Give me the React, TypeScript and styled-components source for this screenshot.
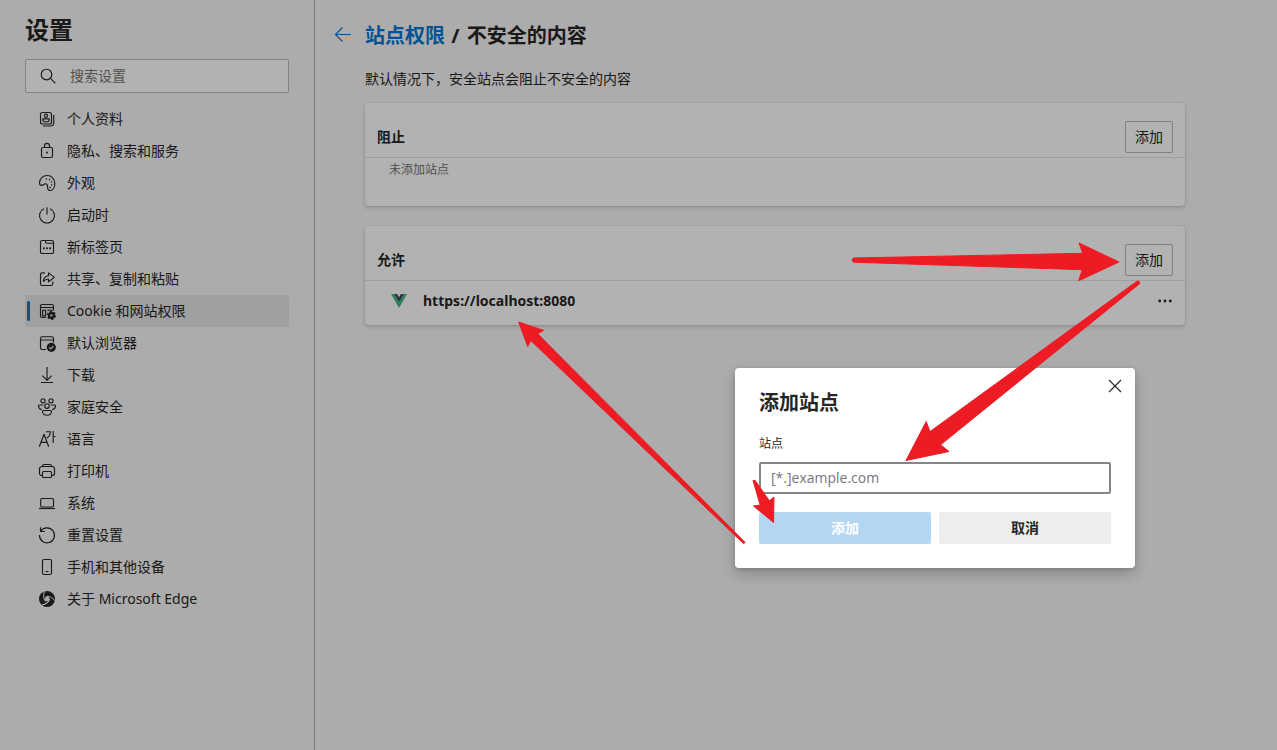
import React from 'react';
import styled, { createGlobalStyle } from 'styled-components';

const GlobalStyle = createGlobalStyle`
  * { box-sizing: border-box; }
  body {
    margin: 0;
    background: #f7f7f7;
    color: #262626;
    font-family: "Noto Sans", "Noto Sans CJK SC", sans-serif;
    font-size: 14px;
    line-height: 20px;
  }
  button, input { font: inherit; color: inherit; }
  h1, h2, p, ul { margin: 0; padding: 0; }
`;

const Page = styled.div`
  position: relative;
  display: flex;
  min-height: 100vh;
  overflow: hidden;
`;

const Sidebar = styled.aside`
  flex: 0 0 315px;
  padding: 12px 25px 0;
  border-right: 1px solid #b0b0b0;
`;

const SidebarTitle = styled.h1`
  font-size: 24px;
  line-height: 36px;
  font-weight: 700;
`;

const SearchBox = styled.label`
  display: flex;
  align-items: center;
  gap: 13px;
  height: 34px;
  margin: 11px 0 10px;
  padding: 0 13px;
  border: 1px solid #bcbcbc;
  border-radius: 2px;
  background: #fff;
`;

const SearchInput = styled.input`
  flex: 1;
  min-width: 0;
  height: 30px;
  padding: 0 0 2px;
  border: 0;
  outline: 0;
  background: transparent;
  &::placeholder { color: #767676; opacity: 1; }
`;

const NavList = styled.ul`
  list-style: none;
`;

const NavLink = styled.a<{ $active?: boolean }>`
  display: flex;
  align-items: center;
  gap: 11px;
  height: 32px;
  padding-left: ${(p) => (p.$active ? 8 : 13)}px;
  border-radius: 2px;
  color: inherit;
  text-decoration: none;
  background: ${(p) => (p.$active ? '#e5e5e5' : 'transparent')};
  &::before {
    content: "";
    display: ${(p) => (p.$active ? 'block' : 'none')};
    width: 3px;
    height: 20px;
    margin: 0 -3px 0 -6px;
    border-radius: 2px;
    background: #0078d4;
  }
`;

const Glyph = styled.svg`
  flex: none;
  display: block;
  overflow: visible;
  fill: none;
  stroke: currentColor;
  stroke-width: 1.15;
  stroke-linejoin: round;
`;

const Main = styled.main`
  flex: 1;
  min-width: 0;
  padding: 21px 20px 24px;
`;

const TitleRow = styled.header`
  display: flex;
  align-items: center;
  gap: 14px;
  height: 30px;
`;

const BackButton = styled.button`
  display: grid;
  place-items: center;
  width: 16px;
  height: 30px;
  padding: 0;
  border: 0;
  background: none;
  color: #0078d4;
`;

const PageTitle = styled.h2`
  font-size: 20px;
  line-height: 30px;
  font-weight: 700;
`;

const Separator = styled.span`
  margin: 0 2px 0 1px;
`;

const Crumb = styled.a`
  color: #0078d4;
  text-decoration: none;
`;

const Content = styled.div`
  max-width: 850px;
  padding-left: 30px;
`;

const Description = styled.p`
  margin: 18px 0 14px;
`;

const Card = styled.section`
  margin-bottom: 20px;
  border-radius: 4px;
  background: #fff;
  box-shadow: 0 2px 4px rgba(0, 0, 0, 0.16), 0 0 2px rgba(0, 0, 0, 0.14);
`;

const CardHeader = styled.div`
  display: flex;
  align-items: center;
  justify-content: space-between;
  padding: 18px 12px 4px;
  border-bottom: 1px solid #e2e2e2;
`;

const CardTitle = styled.h2`
  font-size: 14px;
  line-height: 20px;
  font-weight: 600;
`;

const OutlineButton = styled.button`
  width: 48px;
  height: 32px;
  padding: 0;
  border: 1px solid #b8b8b8;
  border-radius: 2px;
  background: transparent;
`;

const EmptyNote = styled.p`
  height: 48px;
  padding: 2px 24px;
  color: #737373;
  font-size: 12px;
`;

const SiteRow = styled.div`
  display: flex;
  align-items: center;
  gap: 16px;
  height: 44px;
  padding: 0 12px 4px 26px;
`;

const SiteName = styled.span`
  flex: 1;
  font-weight: 700;
`;

const MoreButton = styled.button`
  display: grid;
  place-items: center;
  width: 16px;
  height: 24px;
  padding: 0;
  border: 0;
  background: none;
`;

const Backdrop = styled.div`
  position: absolute;
  inset: 0;
  background: rgba(0, 0, 0, 0.3);
`;

const Dialog = styled.form`
  position: absolute;
  left: 735px;
  top: 368px;
  width: 400px;
  padding: 20px 24px 24px;
  border-radius: 4px;
  background: #fff;
  box-shadow: 0 6px 14px rgba(0, 0, 0, 0.2), 0 1px 4px rgba(0, 0, 0, 0.14);
`;

const DialogTitle = styled.h2`
  font-size: 20px;
  line-height: 30px;
  font-weight: 700;
`;

const CloseButton = styled.button`
  position: absolute;
  top: 6px;
  right: 8px;
  display: grid;
  place-items: center;
  width: 24px;
  height: 24px;
  padding: 0;
  border: 0;
  background: none;
`;

const FieldLabel = styled.label`
  display: block;
  margin: 16px 0 8px;
  font-size: 12px;
`;

const TextField = styled.input`
  display: block;
  width: 100%;
  height: 32px;
  padding: 0 10px 2px;
  border: 2px solid #868686;
  border-radius: 2px;
  outline: 0;
  font-family: "Open Sans", "Noto Sans CJK SC", sans-serif;
  &::placeholder { color: #767676; opacity: 1; }
`;

const Actions = styled.div`
  display: grid;
  grid-template-columns: 1fr 1fr;
  gap: 8px;
  margin-top: 18px;
`;

const ActionButton = styled.button<{ $primary?: boolean }>`
  height: 32px;
  padding: 0;
  border: 0;
  border-radius: 2px;
  font-weight: 600;
  color: ${(p) => (p.$primary ? '#fff' : '#262626')};
  background: ${(p) => (p.$primary ? '#b3d6f2' : '#ededed')};
`;

const Annotations = styled.svg`
  position: absolute;
  left: 0;
  top: 0;
  pointer-events: none;
  fill: #ed1c24;
  stroke: #ed1c24;
  stroke-width: 1;
  stroke-linejoin: round;
`;

const solid = { fill: 'currentColor', stroke: 'none' };

const glyphs: Record<string, React.ReactNode> = {
  profile: (
    <>
      <rect x="2.5" y="2.5" width="11" height="11.5" rx="2" />
      <path d="M15.7 5v7.8a3.2 3.2 0 0 1-3.2 3.2H5" />
      <circle cx="8" cy="5.7" r="1.6" />
      <path d="M4.8 8.8h6.4v1c0 1.4-1.3 2.2-3.2 2.2s-3.2-.8-3.2-2.2z" />
    </>
  ),
  lock: (
    <>
      <rect x="3.5" y="5.5" width="11" height="10" rx="1.5" />
      <path d="M6.5 5.5V3.8a2.5 2.5 0 0 1 5 0v1.7" />
      <circle cx="9" cy="10.5" r="1" {...solid} />
    </>
  ),
  palette: (
    <>
      <path d="M1.5 9C1.5 4.8 4.9 1.5 9.2 1.5c4.5 0 7.6 3.4 7.6 8 0 4-1.8 7-4.5 7-2.4 0-2.7-2-2.7-3.6 0-1.9-.7-3.2-2-3.2-1.8 0-2.1 1.7-4 1.7-1.4 0-2.1-.9-2.1-2.4z" />
      <g {...solid}>
        <circle cx="8.4" cy="5" r=".8" /><circle cx="11.6" cy="5.6" r=".8" />
        <circle cx="13.6" cy="8" r=".8" /><circle cx="13.8" cy="11" r=".8" />
        <circle cx="12.2" cy="13.5" r=".8" />
      </g>
    </>
  ),
  power: <path d="M9 1.2v7.3M5.9 2.7a7.5 7.5 0 1 0 6.2 0" />,
  newTab: (
    <>
      <rect x="2.5" y="2.5" width="13" height="13" rx="1.6" />
      <path d="M7.5 2.5v1.2c0 1 .5 1.5 1.4 1.5h6.6" />
      <g {...solid}>
        <rect x="5" y="9.4" width="1.8" height="1.8" /><rect x="8.1" y="9.4" width="1.8" height="1.8" /><rect x="11.2" y="9.4" width="1.8" height="1.8" />
      </g>
    </>
  ),
  share: (
    <>
      <path d="M6.8 2.8H4.3c-1.1 0-1.8.7-1.8 1.8v9.1c0 1.1.7 1.8 1.8 1.8h8.6c1.1 0 1.8-.7 1.8-1.8v-2.2" />
      <path d="M5.4 11.3c.3-3.2 2-5.3 5.1-5.5V2.9l5.9 4.5-5.9 4.4V9c-2.4 0-3.8.7-5.1 2.3z" />
    </>
  ),
  cookie: (
    <>
      <path d="M8 15.5H4.2c-1 0-1.7-.7-1.7-1.7V4.2c0-1 .7-1.7 1.7-1.7h9.6c1 0 1.7.7 1.7 1.7v4M2.5 5.5h13M9.4 8.2h6" />
      <rect x="4.6" y="8.2" width="3" height="5.6" />
      <circle cx="13.4" cy="13.4" r="2.4" strokeWidth="2.4" />
      <circle cx="13.4" cy="13.4" r="3.8" strokeWidth="1.6" strokeDasharray="1.99 1.99" />
    </>
  ),
  browser: (
    <>
      <path d="M8 15.5H4.2c-1 0-1.7-.7-1.7-1.7V4.4c0-1 .7-1.7 1.7-1.7h9.6c1 0 1.7.7 1.7 1.7v4M2.5 6h13" />
      <circle cx="13.3" cy="13.3" r="4.6" {...solid} />
      <path d="M11.2 13.4l1.5 1.5 2.7-2.8" stroke="#f7f7f7" />
    </>
  ),
  download: <path d="M9 1v13.3M4.3 9.7L9 14.4l4.7-4.7M3 16.5h12" />,
  family: (
    <>
      <circle cx="5" cy="2.8" r="2.1" /><circle cx="13" cy="2.8" r="2.1" /><circle cx="9" cy="8" r="2.3" />
      <path d="M5.2 7H1.4C.7 7 .4 7.4.5 8c.2 2 1.4 3.4 3.2 3.6M12.8 7h3.8c.7 0 1 .4.9 1-.2 2-1.4 3.4-3.2 3.6" />
      <path d="M5.4 12.5h7.2c.7 0 1 .4.9 1-.3 2.3-1.9 3.7-4.5 3.7s-4.2-1.4-4.5-3.7c-.1-.6.2-1 .9-1z" />
    </>
  ),
  language: <path d="M1.3 16.7L6 4.2l4.7 12.5M3 12.3h6M8 1.7h4.4c-.1 2.9-1.3 4.9-3.6 6.2M15.2 1v12M15.2 6.5h2.3" />,
  printer: (
    <>
      <path d="M4.5 13.5h-1c-1.2 0-2-.8-2-2V7c0-1.4 1-2.5 2.5-2.5h10c1.5 0 2.5 1.1 2.5 2.5v4.5c0 1.2-.8 2-2 2h-1" />
      <path d="M4.5 4.3C4.5 3.1 5 2.5 6 2.5h6c1 0 1.5.6 1.5 1.8" />
      <rect x="4.5" y="9.5" width="9" height="6" rx="1" />
    </>
  ),
  system: (
    <>
      <rect x="2.7" y="4.5" width="12.8" height="8.5" rx="1.2" />
      <path d="M1 14.5h16" />
    </>
  ),
  reset: <path d="M2.5 1.3v4.2h4.4M2.7 5.3A7.5 7.5 0 1 1 1.5 9" />,
  phone: (
    <>
      <rect x="4.5" y="1.5" width="9" height="15" rx="1.5" />
      <path d="M7.5 13.5h3" />
    </>
  ),
  edge: (
    <>
      <circle cx="9" cy="9" r="8" {...solid} />
      <circle cx="9.2" cy="9" r="2.3" fill="#f7f7f7" stroke="none" />
      <g stroke="#f7f7f7" strokeWidth="1">
        <path d="M7.6 6.9c3.2-1.4 6.4.5 9.7 4" />
        <path d="M7.6 6.9c3.2-1.4 6.4.5 9.7 4" transform="rotate(120 9 9)" />
        <path d="M7.6 6.9c3.2-1.4 6.4.5 9.7 4" transform="rotate(240 9 9)" />
      </g>
    </>
  ),
};

const items = [
  ['profile', '个人资料'],
  ['lock', '隐私、搜索和服务'],
  ['palette', '外观'],
  ['power', '启动时'],
  ['newTab', '新标签页'],
  ['share', '共享、复制和粘贴'],
  ['cookie', 'Cookie 和网站权限'],
  ['browser', '默认浏览器'],
  ['download', '下载'],
  ['family', '家庭安全'],
  ['language', '语言'],
  ['printer', '打印机'],
  ['system', '系统'],
  ['reset', '重置设置'],
  ['phone', '手机和其他设备'],
  ['edge', '关于 Microsoft Edge'],
];

const arrows = [
  'M853.5 258L1082.7 253.3 1079 243 1119 262 1078.7 280.8 1082.3 269.7 853.5 262.2Q850.5 260 853.5 258z',
  'M1136.6 281.5Q1139.8 279.7 1139.6 283.7L940.6 444.8 949 451.5 906 460.5 926.2 421.5 930 431.6z',
  'M518.7 322L543.7 330.4 537.6 333.7 745 542.3 743.7 543.8 530.8 340.6 527.7 346.5z',
  'M753 480.5L755.2 480.5 769.3 500.8 774 497 773.5 522.5 753.5 506 760.2 505z',
];

export default function App() {
  return (
    <>
      <GlobalStyle />
      <Page>
        <Sidebar>
          <SidebarTitle>设置</SidebarTitle>
          <SearchBox>
            <Glyph width="18" height="18" viewBox="0 0 18 18" aria-hidden="true">
              <circle cx="7.5" cy="7.5" r="5.3" />
              <path d="M11.4 11.4l5 5" />
            </Glyph>
            <SearchInput type="search" placeholder="搜索设置" aria-label="搜索设置" />
          </SearchBox>
          <nav>
            <NavList>
              {items.map(([icon, label]) => (
                <li key={icon}>
                  <NavLink href="#" $active={icon === 'cookie'}>
                    <Glyph width="18" height="18" viewBox="0 0 18 18" aria-hidden="true">{glyphs[icon]}</Glyph>
                    {label}
                  </NavLink>
                </li>
              ))}
            </NavList>
          </nav>
        </Sidebar>
        <Main>
          <TitleRow>
            <BackButton type="button" aria-label="返回">
              <Glyph width="16" height="16" viewBox="0 0 16 16" aria-hidden="true">
                <path d="M16 6.5H.5M7.5-.5l-7 7 7 7" />
              </Glyph>
            </BackButton>
            <PageTitle>
              <Crumb href="#">站点权限</Crumb> <Separator>/</Separator> 不安全的内容
            </PageTitle>
          </TitleRow>
          <Content>
            <Description>默认情况下，安全站点会阻止不安全的内容</Description>
            <Card>
              <CardHeader>
                <CardTitle>阻止</CardTitle>
                <OutlineButton type="button">添加</OutlineButton>
              </CardHeader>
              <EmptyNote>未添加站点</EmptyNote>
            </Card>
            <Card>
              <CardHeader>
                <CardTitle>允许</CardTitle>
                <OutlineButton type="button">添加</OutlineButton>
              </CardHeader>
              <SiteRow>
                <svg width="16" height="16" viewBox="0 0 16 16" aria-hidden="true">
                  <path d="M0 1h3.2L8 9.3 12.8 1H16L8 14.9z" fill="#41b883" />
                  <path d="M3.2 1h2.9L8 4.3 9.9 1h2.9L8 9.3z" fill="#35495e" />
                </svg>
                <SiteName>https://localhost:8080</SiteName>
                <MoreButton type="button" aria-label="更多操作">
                  <svg width="16" height="16" viewBox="0 0 16 16" fill="currentColor" aria-hidden="true">
                    <circle cx="2.7" cy="8" r="1.4" /><circle cx="8" cy="8" r="1.4" /><circle cx="13.3" cy="8" r="1.4" />
                  </svg>
                </MoreButton>
              </SiteRow>
            </Card>
          </Content>
        </Main>
        <Backdrop />
        <Dialog role="dialog" aria-labelledby="dialog-title">
          <DialogTitle id="dialog-title">添加站点</DialogTitle>
          <CloseButton type="button" aria-label="关闭">
            <Glyph width="12" height="12" viewBox="0 0 12 12" aria-hidden="true">
              <path d="M0 0l12 12M12 0L0 12" />
            </Glyph>
          </CloseButton>
          <FieldLabel htmlFor="site">站点</FieldLabel>
          <TextField id="site" type="text" placeholder="[*.]example.com" />
          <Actions>
            <ActionButton type="button" $primary>添加</ActionButton>
            <ActionButton type="button">取消</ActionButton>
          </Actions>
        </Dialog>
        <Annotations width="1277" height="750" viewBox="0 0 1277 750" aria-hidden="true">
          {arrows.map((d) => <path key={d} d={d} />)}
        </Annotations>
      </Page>
    </>
  );
}
